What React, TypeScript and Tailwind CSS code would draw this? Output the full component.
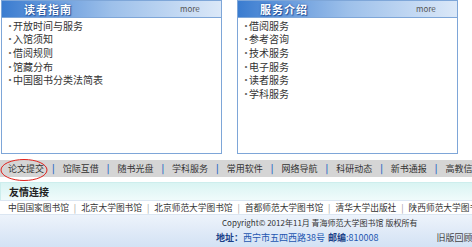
import React from "react";

const guide = ["开放时间与服务", "入馆须知", "借阅规则", "馆藏分布", "中国图书分类法简表"];
const services = ["借阅服务", "参考咨询", "技术服务", "电子服务", "读者服务", "学科服务"];
const navItems = ["论文提交", "馆际互借", "随书光盘", "学科服务", "常用软件", "网络导航", "科研动态", "新书通报", "高教信息"];
const links = ["中国国家图书馆", "北京大学图书馆", "北京师范大学图书馆", "首都师范大学图书馆", "清华大学出版社", "陕西师范大学图书馆"];

const font = { fontFamily: '"Noto Sans CJK SC", "Noto Sans", sans-serif' };

function Box({ title, items }: { title: string; items: string[] }) {
  return (
    <div className="w-[221px] h-[154px] border border-[#7ea6d8] bg-white shrink-0">
      <div className="h-[17px] flex items-center bg-gradient-to-r from-[#3a7cd0] via-[#9dc0ea] to-[#dbe8f8] border-b border-[#7ea6d8]">
        <span className="ml-[22px] w-[150px] text-[11px] font-bold text-white tracking-[1px] [text-shadow:0_0_2px_#1f4f9a,1px_1px_1px_#1f4f9a]">
          {title}
        </span>
        <span className="text-[8px] text-[#555] ml-[6px]">more</span>
      </div>
      <ul className="pt-[1px]">
        {items.map((t) => (
          <li key={t} className="h-[13.6px] flex items-center text-[10px] leading-[12px] text-[#333] pl-[3px]">
            <span className="w-[8px] text-[#666]">·</span>
            <span>{t}</span>
          </li>
        ))}
      </ul>
    </div>
  );
}

export default function App() {
  return (
    <div className="relative w-[472px] h-[247px] overflow-hidden bg-white" style={font}>
      <div className="w-[700px]">
        <div className="flex gap-[15px] pl-[1px]">
          <Box title="读者指南" items={guide} />
          <Box title="服务介绍" items={services} />
        </div>

        <div className="mt-[6px] h-[17px] bg-[#d5d5d5] flex items-center pl-[8px] text-[9px] text-[#333]">
          {navItems.map((n, i) => (
            <React.Fragment key={n}>
              {i > 0 && <span className="mx-[8px] text-[#2f6cc6] font-bold">|</span>}
              <span>{n}</span>
            </React.Fragment>
          ))}
        </div>

        <div className="mt-[5px] h-[18px] flex items-center pl-[8px] border-l border-t border-[#cdeeed] bg-gradient-to-b from-[#d9f4f3] to-[#f0fbfb] text-[10px] font-bold text-[#222]">
          友情连接
        </div>

        <div className="h-[15px] flex items-center pl-[8px] border-b border-t border-[#dbe6f2] text-[8.7px] text-[#333]">
          {links.map((l, i) => (
            <React.Fragment key={l}>
              {i > 0 && <span className="mx-[5px] text-[#999]">|</span>}
              <span>{l}</span>
            </React.Fragment>
          ))}
        </div>

        <div className="h-[32px] bg-gradient-to-b from-[#edf3fb] to-[#d3e2f4] relative">
          <div className="pl-[222px] pt-[3px] text-[8px] text-[#333] leading-[10px]">
            Copyright© 2012年11月 青海师范大学图书馆 版权所有
          </div>
          <div className="pl-[216px] pt-[5px] flex text-[9px] leading-[10px]">
            <span className="text-[#1a3f88] font-bold">地址：</span>
            <span className="text-[#2356b0]">西宁市五四西路38号 </span>
            <span className="text-[#1a3f88] font-bold ml-[3px]">邮编</span>
            <span className="text-[#2356b0]">:810008</span>
            <span className="ml-[58px] text-[#444]">旧版回顾</span>
          </div>
        </div>
      </div>

      <svg className="absolute left-0 top-[158px]" width="50" height="26" viewBox="0 0 50 26">
        <ellipse cx="24" cy="12" rx="23" ry="10.5" fill="none" stroke="#e0231e" strokeWidth="1" />
      </svg>
    </div>
  );
}
